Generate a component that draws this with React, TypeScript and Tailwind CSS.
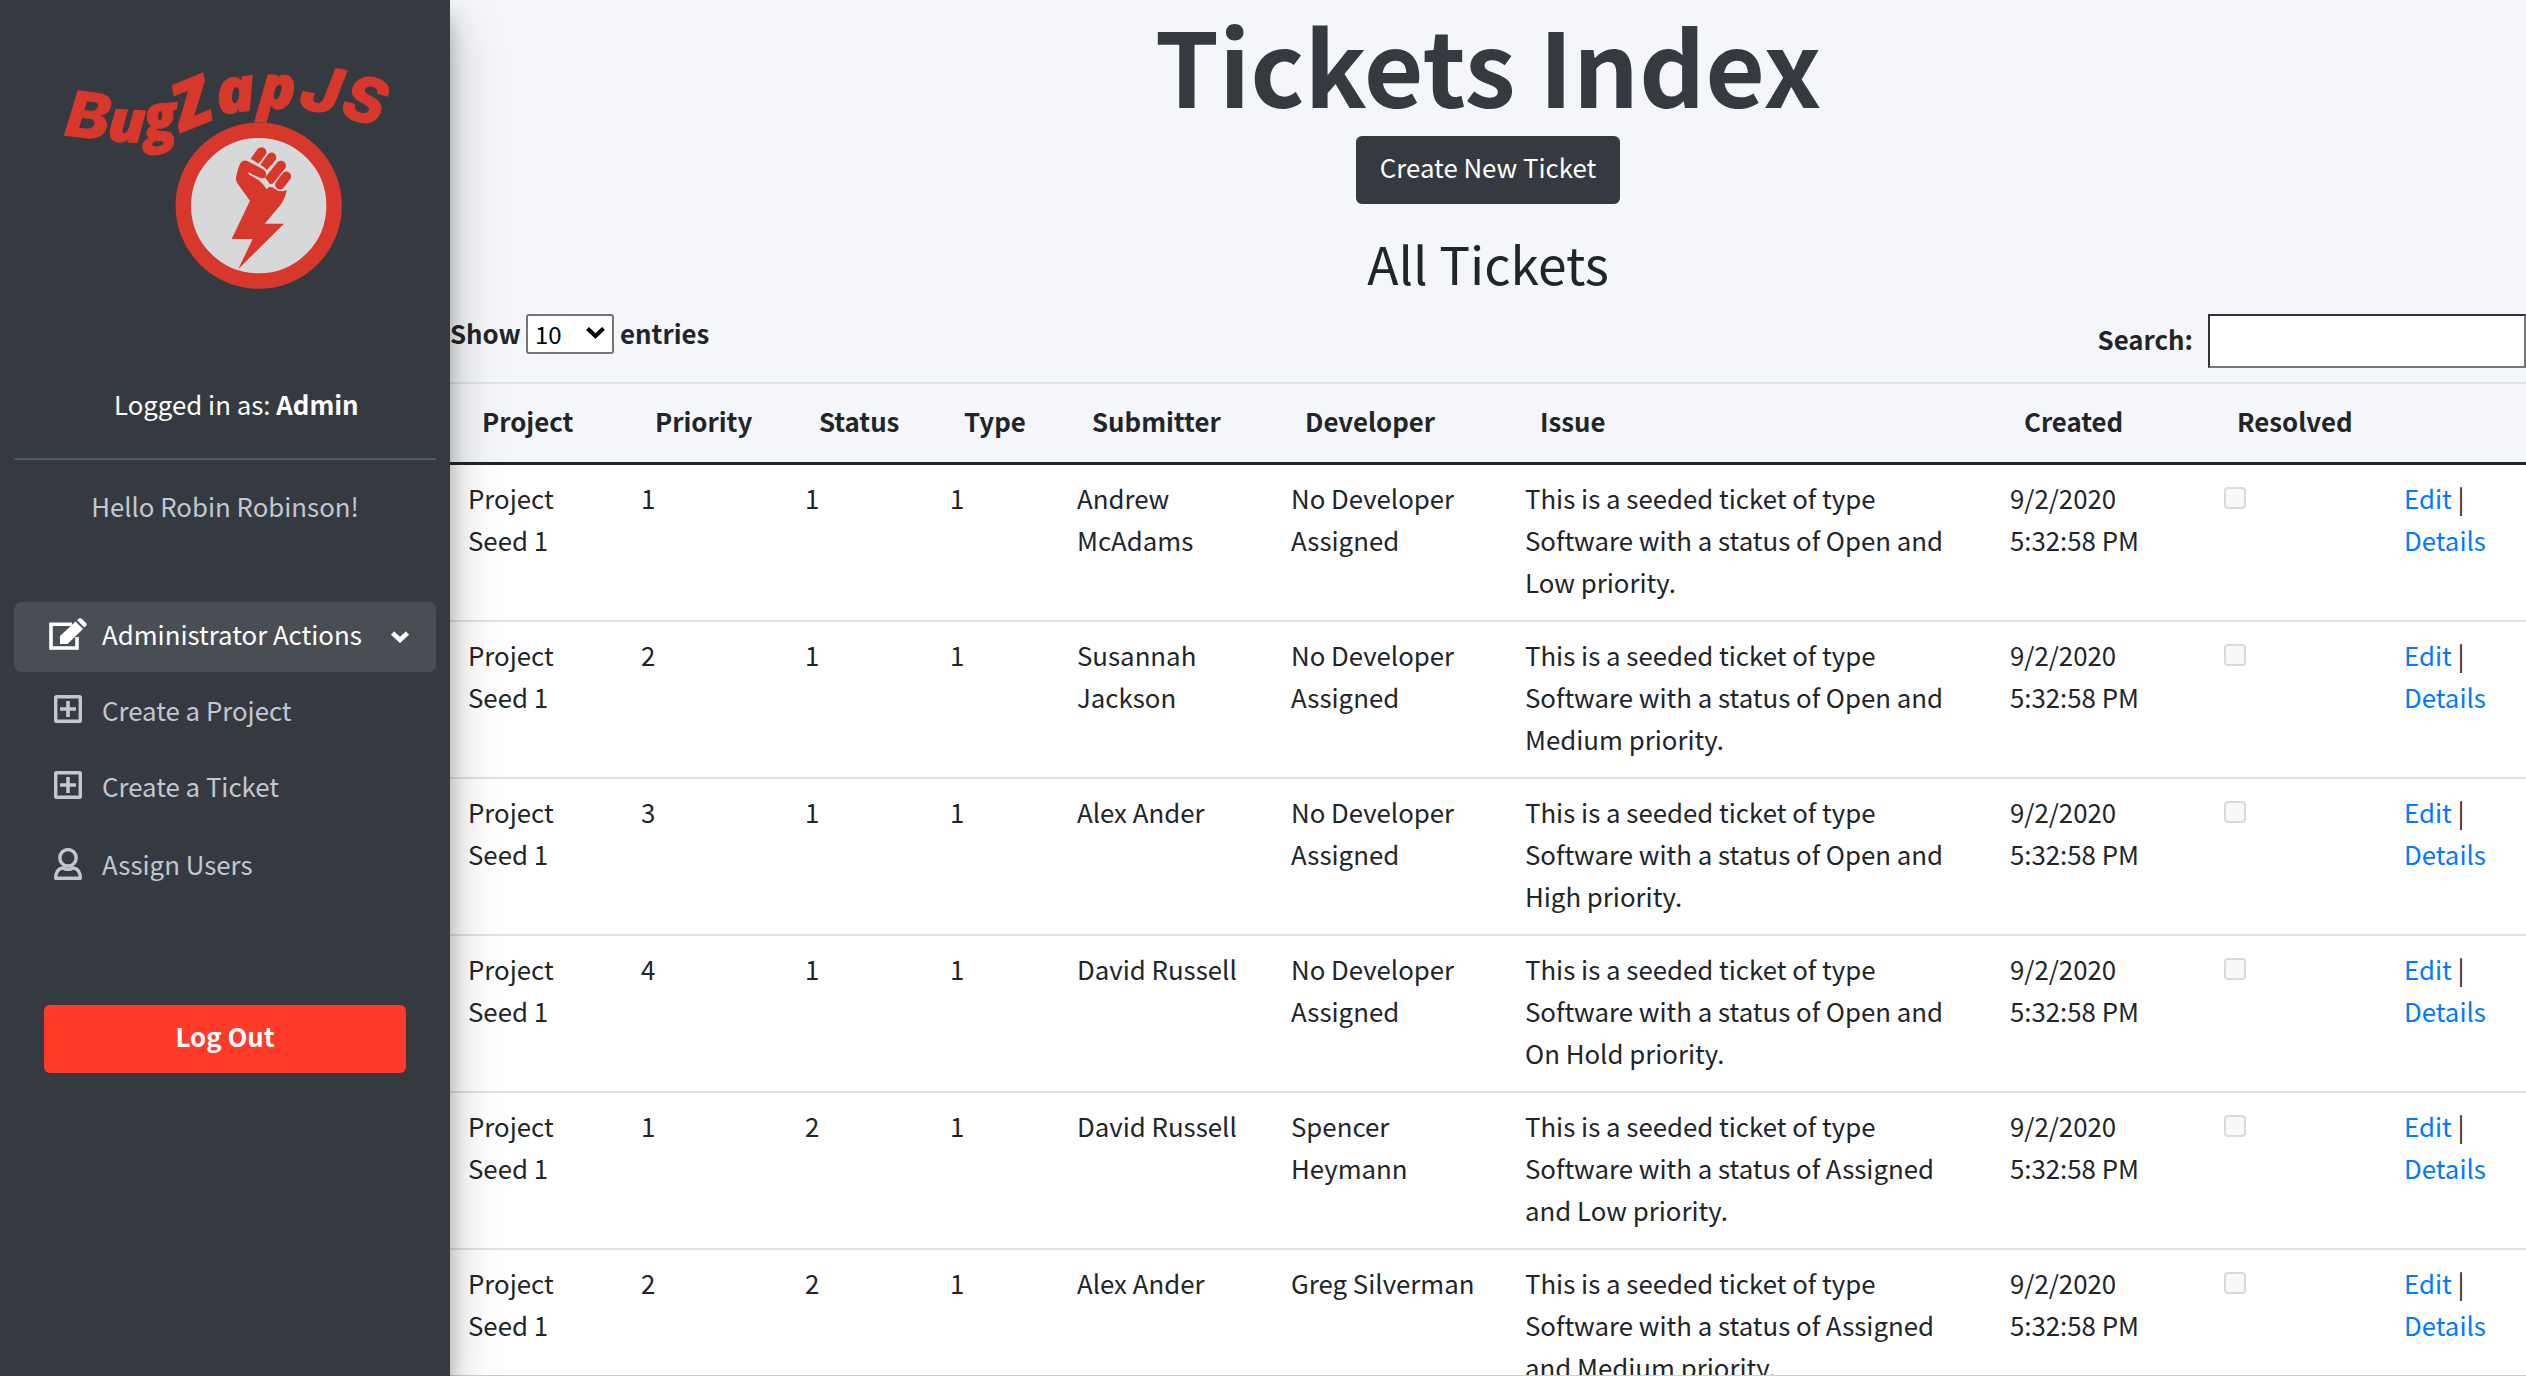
import type { ReactNode } from "react";

type Ticket = {
  priority: string;
  status: string;
  submitter: string[];
  developer: string[];
  issue: string[];
};

const tickets: Ticket[] = [
  { priority: "1", status: "1", submitter: ["Andrew", "McAdams"], developer: ["No Developer", "Assigned"], issue: ["Software with a status of Open and", "Low priority."] },
  { priority: "2", status: "1", submitter: ["Susannah", "Jackson"], developer: ["No Developer", "Assigned"], issue: ["Software with a status of Open and", "Medium priority."] },
  { priority: "3", status: "1", submitter: ["Alex Ander"], developer: ["No Developer", "Assigned"], issue: ["Software with a status of Open and", "High priority."] },
  { priority: "4", status: "1", submitter: ["David Russell"], developer: ["No Developer", "Assigned"], issue: ["Software with a status of Open and", "On Hold priority."] },
  { priority: "1", status: "2", submitter: ["David Russell"], developer: ["Spencer", "Heymann"], issue: ["Software with a status of Assigned", "and Low priority."] },
  { priority: "2", status: "2", submitter: ["Alex Ander"], developer: ["Greg Silverman"], issue: ["Software with a status of Assigned", "and Medium priority."] },
];

const columns = "grid grid-cols-[173px_164px_145px_128px_213px_235px_484px_213px_181px_1fr]";

// Each wordmark letter sits on an arc above the badge.
const letters = [
  { ch: "B", t: "translate(85.500 138) rotate(7) scale(1.05 1)", size: 63, inter: true },
  { ch: "u", t: "translate(126 142) rotate(3) scale(1.05 1)", size: 58, inter: false },
  { ch: "g", t: "translate(162 139) rotate(-6) scale(0.93 1)", size: 63, inter: false },
  { ch: "Z", t: "translate(200 125) rotate(-22) scale(1.04 1)", size: 66, inter: false },
  { ch: "a", t: "translate(238 112) rotate(-8) scale(1.05 1)", size: 62, inter: false },
  { ch: "p", t: "translate(276.500 108.500) rotate(4)", size: 60, inter: false },
  { ch: "J", t: "translate(317.500 111.500) rotate(11) scale(1.07 1)", size: 63, inter: true },
  { ch: "S", t: "translate(359 121.500) rotate(16)", size: 63, inter: true },
];

function Logo() {
  return (
    <svg viewBox="0 0 450 360" className="h-[360px] w-[450px] shrink-0">
      <circle cx="258.7" cy="205.7" r="75.4" fill="#d6d8da" stroke="#d7382b" strokeWidth="15.5" />
      {letters.map((l) => (
        <text
          key={l.ch}
          transform={l.t}
          fontSize={l.size}
          textAnchor="middle"
          fill="#d7382b"
          stroke="#d7382b"
          strokeLinejoin="round"
          className={
            l.inter
              ? "font-['Inter'] font-extrabold italic stroke-[1px]"
              : "font-['Open_Sans'] font-extrabold italic stroke-[1px]"
          }
        >
          {l.ch}
        </text>
      ))}
      <g transform="translate(190 130) scale(0.3333)" fill="#d7382b">
        <path d="M152 98Q160 89 170 92L222 119Q232 128 226 142L232 172Q246 168 256 178Q272 188 290 180Q287 203 272 224L224 281H282L145 417L188 327H125L180 212L142 160Q136 150 139 138Q144 112 152 98Z" />
        <path d="M182 86L202 58Q212 47 224 55Q232 62 228 72L206 101Z" />
        <path d="M211 104L233 74Q243 63 254 71Q262 80 257 90L231 120Q226 112 211 104Z" />
        <path d="M273 107L240 148" stroke="#d7382b" strokeWidth="30" strokeLinecap="round" />
        <path d="M289 139L270 164" stroke="#d6d8da" strokeWidth="35" strokeLinecap="round" />
        <path d="M289 139L270 164" stroke="#d7382b" strokeWidth="29" strokeLinecap="round" />
        <path d="M174 127L206 142Q217 147 226 143L242 166L230 178Q214 150 177 134Z" fill="#d6d8da" />
      </g>
    </svg>
  );
}

function EditIcon() {
  return (
    <svg viewBox="0 0 38 33" className="h-[33px] w-[38px]">
      <path d="M23 6.2H2V30H28V19" fill="none" stroke="#fff" strokeWidth="3.6" />
      <path d="M11 26V18L26.5 3.5L34 11L18.5 26Z" fill="#fff" />
      <path d="M28 2L30 .6Q31.5 -.4 33 1L37 5Q38.3 6.500 37 8L35.200 9.600Z" fill="#fff" />
      <path d="M26.300 3.300L34.300 11" stroke="#9fa3a8" strokeWidth="1" />
    </svg>
  );
}

function PlusBoxIcon() {
  return (
    <svg viewBox="0 0 28 28" className="h-[28px] w-[28px]" fill="none" stroke="#c2c7d0">
      <rect x="1.700" y="1.700" width="24.600" height="24.600" rx=".8" strokeWidth="3.400" />
      <path d="M14 6V22M6 14H22" strokeWidth="3.600" />
    </svg>
  );
}

function UserIcon() {
  return (
    <svg viewBox="0 0 28 32" className="h-[32px] w-[28px]" fill="none" stroke="#c2c7d0" strokeWidth="3.400">
      <circle cx="14" cy="9.800" r="8.200" />
      <path d="M8.500 19.800C4 20.600 1.700 24.500 1.700 30.300H26.300C26.300 24.500 24 20.600 19.500 19.800Q14 23 8.500 19.800Z" strokeLinejoin="round" />
    </svg>
  );
}

function NavItem({ icon, label, className }: { icon: ReactNode; label: string; className: string }) {
  return (
    <a className={`flex h-[70px] items-start pl-[40px] pt-[11px] text-[#c2c7d0] ${className}`}>
      <span className="flex h-[42px] w-[48px] items-center">{icon}</span>
      {label}
    </a>
  );
}

function Lines({ lines, className = "pl-[17px]" }: { lines: string[]; className?: string }) {
  return (
    <div className={className}>
      {lines.map((l) => (
        <div key={l}>{l}</div>
      ))}
    </div>
  );
}

export default function App() {
  return (
    <div className="flex h-[1376px] w-[2526px] overflow-hidden bg-[#f4f6f9] font-['Noto_Sans_CJK_SC',sans-serif] text-[25.8px] leading-[42px] text-[#212529]">
      <aside className="relative z-10 flex w-[450px] shrink-0 flex-col bg-[#343a40] shadow-[0_24px_48px_rgba(0,0,0,0.25),0_17px_17px_rgba(0,0,0,0.22)]">
        <Logo />
        <div className="mt-[23px] whitespace-pre pl-[114px] text-white">
          Logged in as: <b>Admin</b>
        </div>
        <div className="mx-[14px] mt-[33px] h-[2px] bg-[#4f5962]" />
        <div className="mt-[25px] text-center text-[#c2c7d0]">Hello Robin Robinson!</div>
        <nav className="mx-[14px] mt-[75px] flex flex-col whitespace-nowrap">
          <a className="flex h-[70px] items-start rounded-[7px] bg-[#494e54] pl-[35px] pt-[11px] text-white">
            <span className="mt-[5px] w-[53px]">
              <EditIcon />
            </span>
            Administrator Actions
            <svg viewBox="0 0 20 13" className="ml-[28px] mt-[17px] h-[13px] w-[20px]">
              <path d="M2.500 3L10 10L17.500 3" fill="none" stroke="#fff" strokeWidth="4.600" />
            </svg>
          </a>
          <NavItem icon={<span className="-mt-[3px]"><PlusBoxIcon /></span>} label="Create a Project" className="mt-[6px]" />
          <NavItem icon={<span className="-mt-[3px]"><PlusBoxIcon /></span>} label="Create a Ticket" className="mt-[6px]" />
          <NavItem icon={<span><UserIcon /></span>} label="Assign Users" className="mt-[8px]" />
        </nav>
        <button className="mx-[44px] mt-[103px] h-[68px] rounded-[6px] bg-[#ff3a28] pb-[6px] font-bold text-white">
          Log Out
        </button>
      </aside>

      <main className="flex min-w-0 flex-1 flex-col">
        <header className="flex flex-col items-center pt-[2px]">
          <h1 className="text-[103px] font-bold leading-[124px] text-[#343a40]">Tickets Index</h1>
          <button className="mt-[10px] h-[68px] w-[264px] rounded-[6px] bg-[#343a40] pb-[7px] text-white">
            Create New Ticket
          </button>
          <h2 className="mt-[28px] text-[51.5px] leading-[62px]">All Tickets</h2>
        </header>

        <div className="flex h-[88px] items-start justify-between font-bold">
          <label className="flex items-start pt-[18px]">
            <span className="w-[76px]">Show</span>
            <span className="mt-[2px] flex h-[40px] w-[88px] items-center justify-between rounded-[3px] border-2 border-[#767676] bg-white pl-[7px] pr-[7px] text-[24px] font-normal text-black">
              <span>10</span>
              <svg viewBox="0 0 19 12" className="-mt-[3px] h-[12px] w-[19px]">
                <path d="M1.500 1.500L9.500 9L17.500 1.500" fill="none" stroke="#000" strokeWidth="4" />
              </svg>
            </span>
            <span className="ml-[6px]">entries</span>
          </label>
          <label className="flex items-start pt-[20px]">
            <span className="mt-[4px]">Search:</span>
            <input className="ml-[15px] h-[54px] w-[318px] border-2 border-b-[#767676] border-l-[#333] border-r-[#767676] border-t-[#333] bg-white" />
          </label>
        </div>

        <div className={`${columns} h-[83px] shrink-0 border-b-[3px] border-t-2 border-b-[#212529] border-t-[#dee2e6] pt-[16px] font-bold`}>
          {["Project", "Priority", "Status", "Type", "Submitter", "Developer", "Issue", "Created", "Resolved"].map((h) => (
            <div key={h} className="pl-[32px]">{h}</div>
          ))}
        </div>

        <div className="flex-1 overflow-hidden bg-white">
          {tickets.map((t, i) => (
            <div key={i} className={`${columns} border-t-2 border-[#dee2e6] pb-[17px] pt-[12px] first:border-t-0`}>
              <Lines lines={["Project", "Seed 1"]} className="pl-[18px]" />
              <Lines lines={[t.priority]} className="pl-[18px]" />
              <Lines lines={[t.status]} className="pl-[18px]" />
              <Lines lines={["1"]} className="pl-[18px]" />
              <Lines lines={t.submitter} />
              <Lines lines={t.developer} className="pl-[18px]" />
              <Lines lines={["This is a seeded ticket of type", ...t.issue]} />
              <Lines lines={["9/2/2020", "5:32:58 PM"]} className="pl-[18px]" />
              <div className="pl-[19px] pt-[10px]">
                <div className="h-[22px] w-[22px] rounded-[4px] border-2 border-[#dadada] bg-[#f8f8f8]" />
              </div>
              <div className="pl-[18px] text-[#007bff]">
                <div>Edit <span className="text-[#212529]">|</span></div>
                <div>Details</div>
              </div>
            </div>
          ))}
        </div>
        <div className="h-px shrink-0 bg-[#cfcfcf]" />
      </main>
    </div>
  );
}
